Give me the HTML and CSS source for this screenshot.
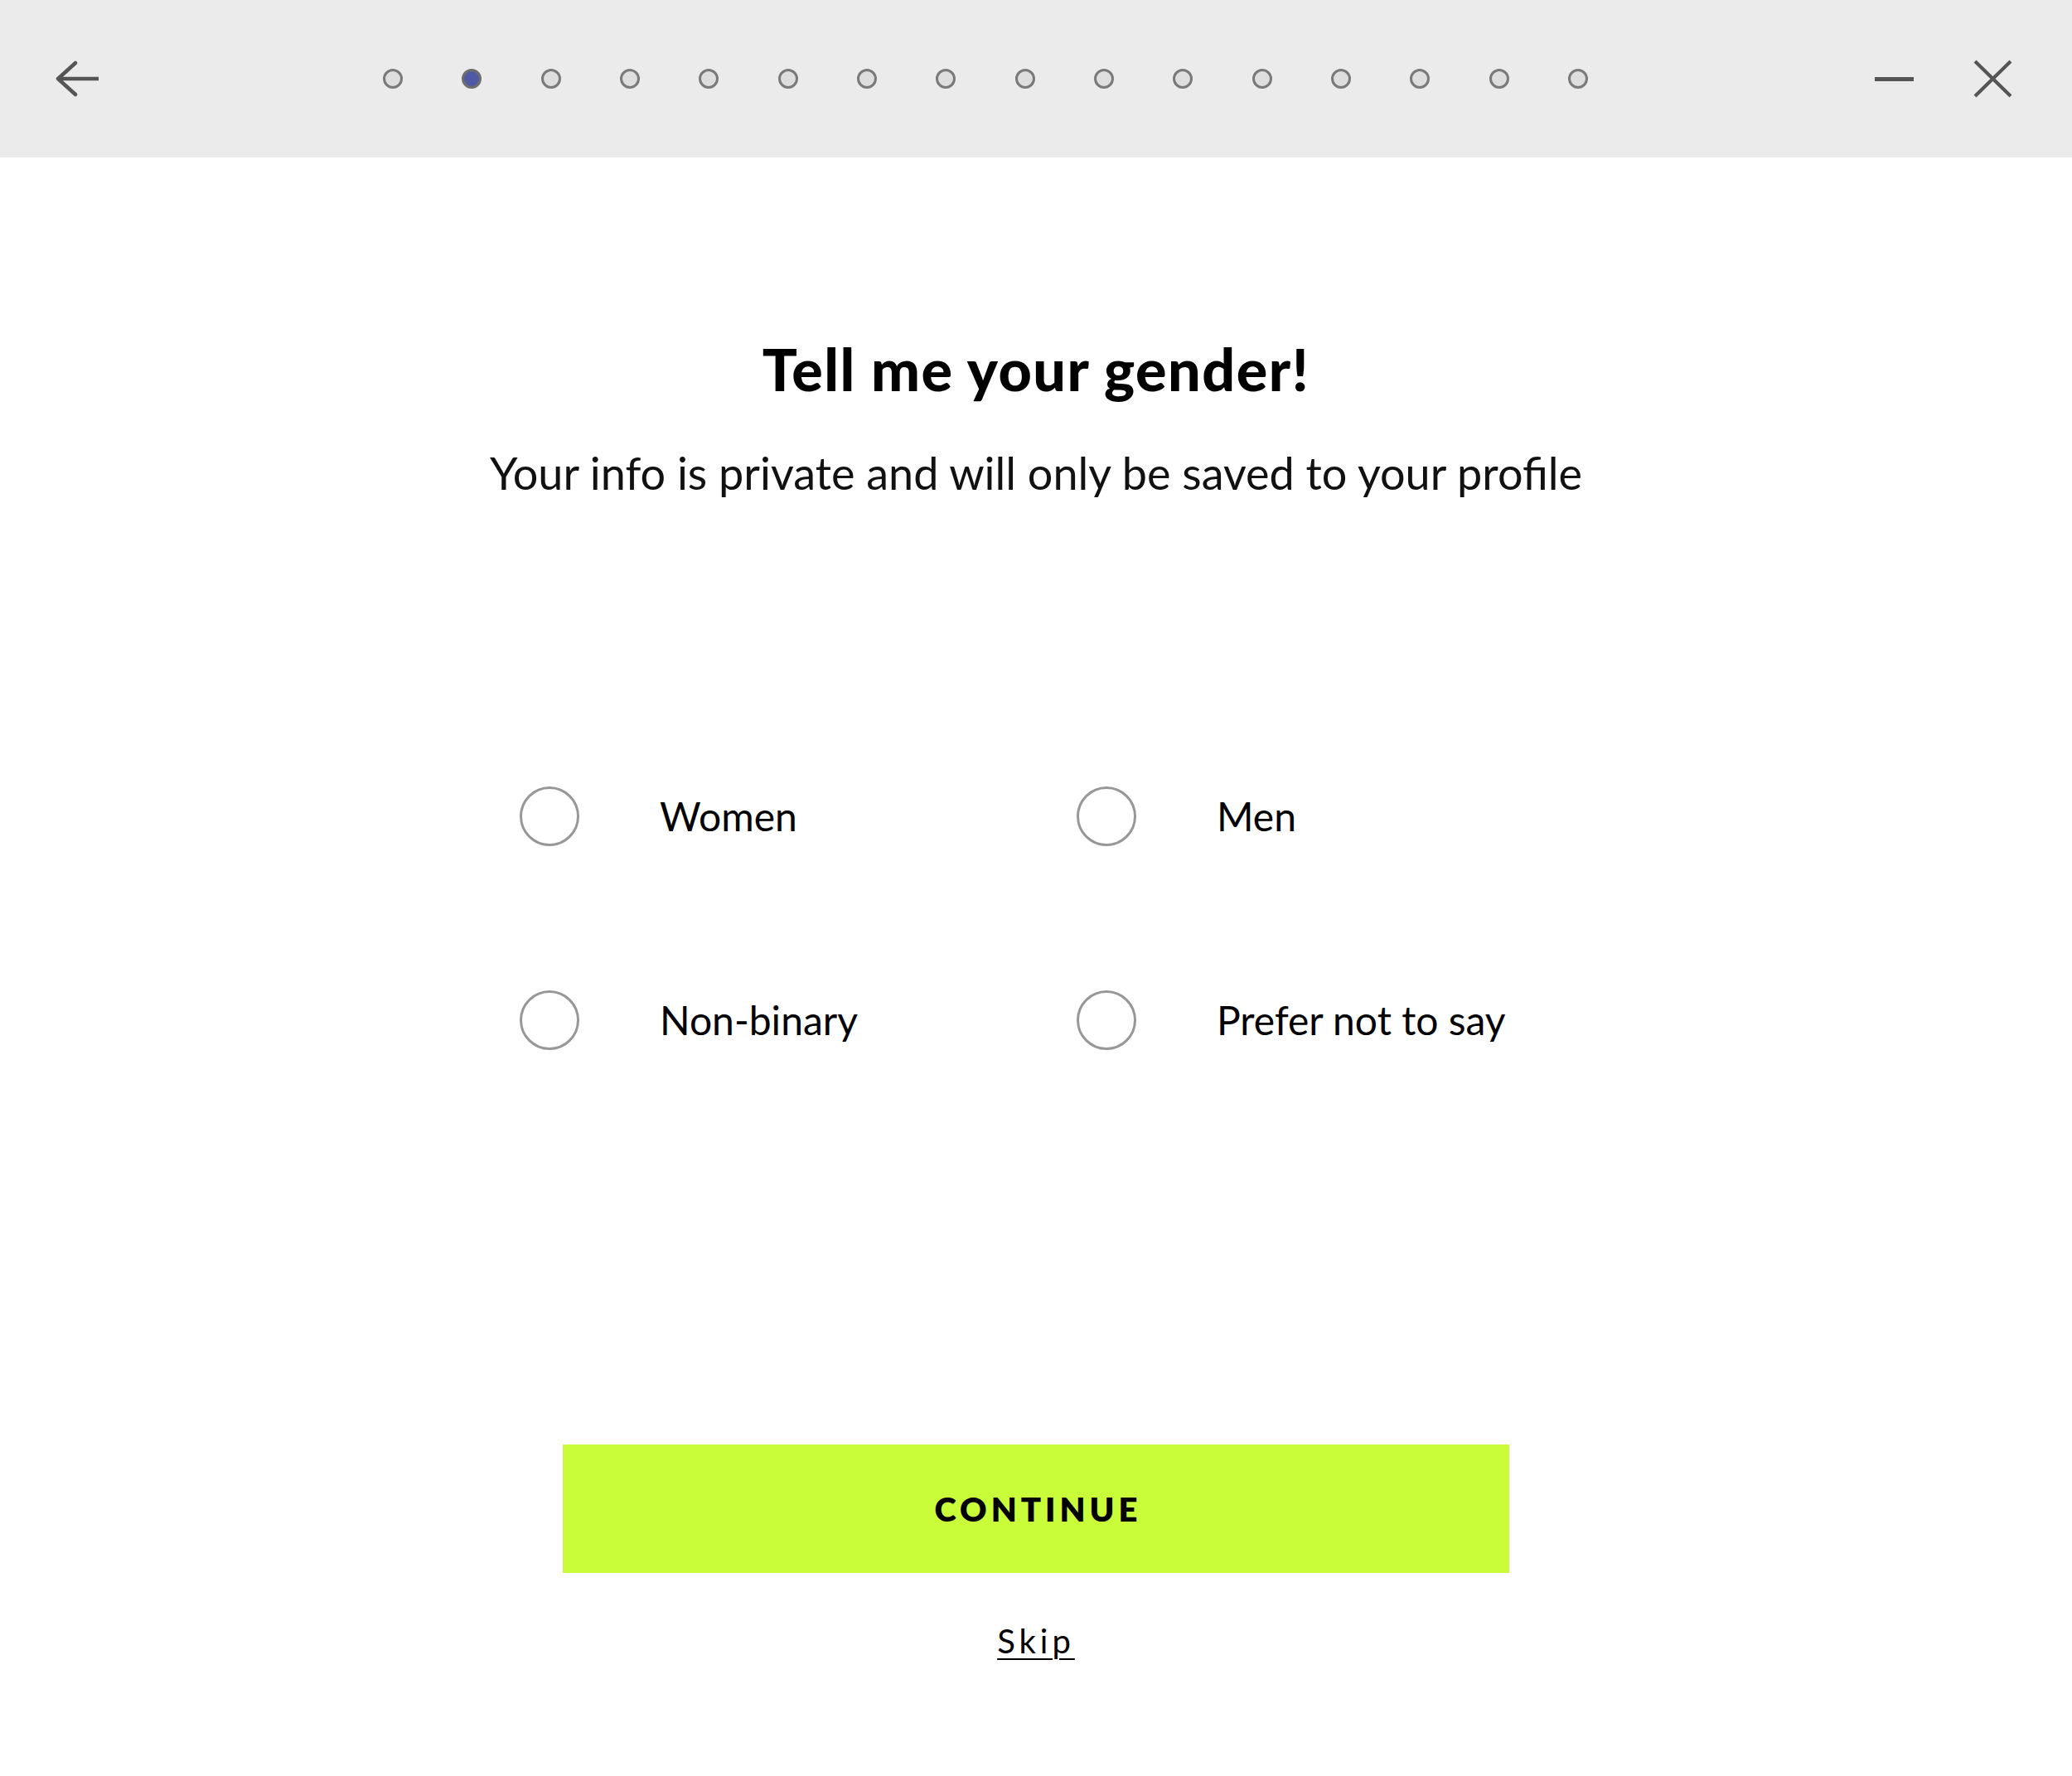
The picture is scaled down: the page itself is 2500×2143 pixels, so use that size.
FILE: index.html
```html
<!DOCTYPE html>
<html lang="en">
<head>
<meta charset="utf-8">
<title>Tell me your gender</title>
<link rel="stylesheet" href="styles.css">
</head>
<body>
<header class="topbar">
  <button class="icon-btn back" aria-label="Back">
    <svg width="52" height="44" viewBox="0 0 52 44"><path d="M24 3 L3 22 L24 41 M3 22 H52" fill="none" stroke="#555" stroke-width="4.5" stroke-linecap="round" stroke-linejoin="round"/></svg>
  </button>
  <ol class="steps">
    <li class="dot"></li>
    <li class="dot active"></li>
    <li class="dot"></li>
    <li class="dot"></li>
    <li class="dot"></li>
    <li class="dot"></li>
    <li class="dot"></li>
    <li class="dot"></li>
    <li class="dot"></li>
    <li class="dot"></li>
    <li class="dot"></li>
    <li class="dot"></li>
    <li class="dot"></li>
    <li class="dot"></li>
    <li class="dot"></li>
    <li class="dot"></li>
  </ol>
  <div class="win-actions">
    <button class="icon-btn minimize" aria-label="Minimize"><span class="bar"></span></button>
    <button class="icon-btn close" aria-label="Close">
      <svg width="47" height="46" viewBox="0 0 47 46"><path d="M2 2 L45 44 M45 2 L2 44" fill="none" stroke="#555" stroke-width="4.2"/></svg>
    </button>
  </div>
</header>
<main class="content">
  <h1 class="title">Tell me your gender!</h1>
  <p class="subtitle">Your info is private and will only be saved to your profile</p>
  <div class="options">
    <label class="option"><span class="radio"></span><span class="label">Women</span></label>
    <label class="option"><span class="radio"></span><span class="label">Men</span></label>
    <label class="option"><span class="radio"></span><span class="label">Non-binary</span></label>
    <label class="option"><span class="radio"></span><span class="label">Prefer not to say</span></label>
  </div>
  <button class="continue">CONTINUE</button>
  <a class="skip" href="#">Skip</a>
</main>
</body>
</html>
```

FILE: styles.css
```css
* { box-sizing: border-box; }
html, body { margin: 0; padding: 0; background: #fff; }
body {
  font-family: "Lato", "Liberation Sans", sans-serif;
  color: #000;
  width: 2500px;
  min-height: 2143px;
}
.topbar {
  height: 190px;
  background: #ebebeb;
  display: flex;
  align-items: center;
  padding: 0 72px 0 67px;
}
.icon-btn {
  background: none;
  border: 0;
  padding: 0;
  margin: 0;
  display: flex;
  align-items: center;
  justify-content: center;
  cursor: pointer;
}
.back { width: 52px; height: 44px; }
.steps {
  list-style: none;
  margin: 0 0 0 343px;
  padding: 0;
  display: flex;
  gap: 71.33px;
  align-items: center;
}
.dot {
  width: 24px;
  height: 24px;
  border-radius: 50%;
  border: 3px solid #7a7a7a;
  background: #dedede;
}
.dot.active {
  background: #5059a3;
  border-color: #6e6e6e;
}
.win-actions {
  margin-left: auto;
  display: flex;
  align-items: center;
  gap: 72px;
}
.minimize { width: 47px; height: 46px; }
.minimize .bar { display: block; width: 47px; height: 5px; background: #555; }
.close { width: 47px; height: 46px; }

.content {
  display: flex;
  flex-direction: column;
  align-items: center;
}
.title {
  margin: 213px 0 0;
  font-size: 70px;
  line-height: 1.2;
  font-weight: 900;
  letter-spacing: 1.5px;
}
.subtitle {
  margin: 52px 0 0;
  font-size: 54px;
  line-height: 1.2;
  font-weight: 400;
  color: #111;
}
.options {
  align-self: flex-start;
  margin: 341px 0 0 627px;
  display: grid;
  grid-template-columns: 672px 672px;
  row-gap: 166px;
}
.option {
  display: flex;
  align-items: center;
  height: 80px;
  gap: 97px;
}
.radio {
  width: 72px;
  height: 72px;
  border-radius: 50%;
  border: 3px solid #979797;
  flex: none;
}
.label {
  font-size: 48px;
  line-height: 1.2;
  color: #000;
}
.continue {
  margin-top: 472px;
  width: 1142px;
  height: 155px;
  background: #c9fd3a;
  border: 0;
  font-family: inherit;
  font-weight: 800;
  font-size: 40px;
  letter-spacing: 5px;
  color: #000;
  padding: 2px 0 0 5px;
}
.skip {
  margin-top: 58px;
  font-size: 40px;
  line-height: 1.2;
  letter-spacing: 5px;
  color: #000;
  text-decoration: underline;
  text-decoration-thickness: 2px;
  text-underline-offset: 6px;
}
```
